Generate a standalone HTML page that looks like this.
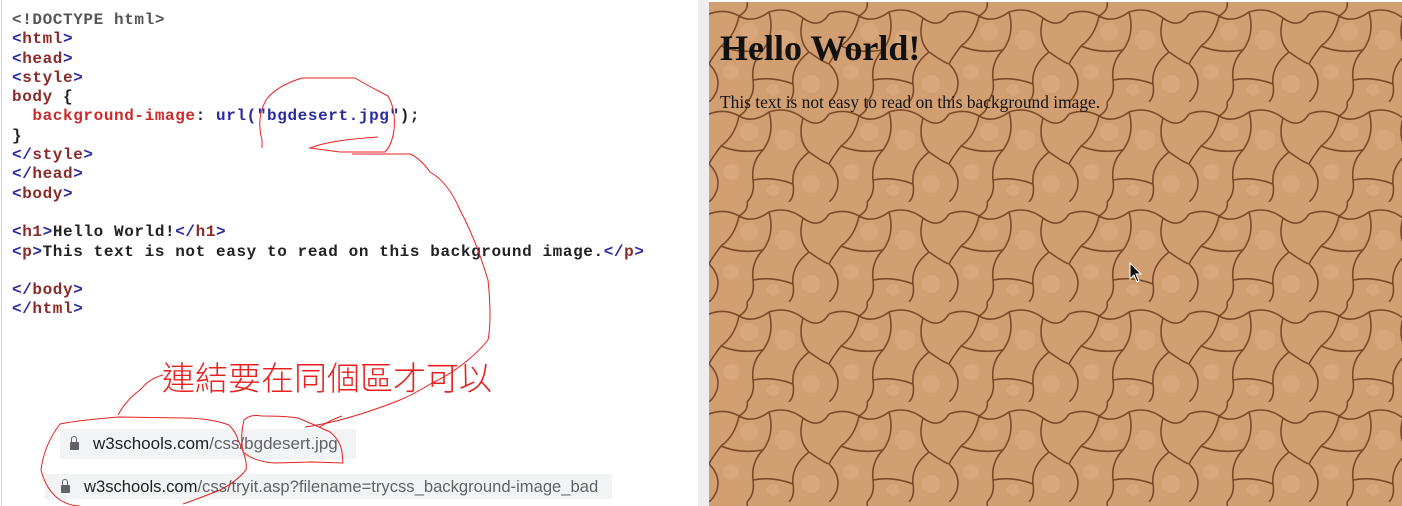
<!DOCTYPE html>
<html><head><meta charset="utf-8">
<style>
html,body{margin:0;padding:0;width:1402px;height:506px;overflow:hidden;background:#fff;position:relative}
.edge{position:absolute;left:1px;top:0;width:1px;height:506px;background:#d8d8d8}
.code{position:absolute;left:12px;top:11px;font-family:"Liberation Mono",monospace;font-size:16px;letter-spacing:0.6px;line-height:19.3px;font-weight:bold;color:#222;white-space:pre;margin:0}
.t{color:#2a2aa0}.n{color:#8a2a2a}.r{color:#cc2a2a}.b{color:#2a2aa0}.g{color:#555}
.div{position:absolute;left:698px;top:0;width:11px;height:506px;background:#eceef0}
.right{position:absolute;left:709px;top:2px;width:693px;height:504px}
.right h1{position:absolute;left:11px;top:25px;margin:0;font-family:"Liberation Serif",serif;font-size:36px;font-weight:bold;color:#111}
.right p{position:absolute;left:11px;top:90px;margin:0;font-family:"Liberation Serif",serif;font-size:17.4px;color:#111}
.bar{position:absolute;background:#f1f3f4;font-family:"Liberation Sans",sans-serif;font-size:17px;color:#202124}
.bar span{color:#5f6368}
.lock{display:inline-block;width:9px;height:8px;background:#5f6368;border-radius:1px;position:relative;margin-right:14px;vertical-align:-1px}
.lock:before{content:"";position:absolute;left:1px;top:-6px;width:4px;height:6px;border:1.5px solid #5f6368;border-bottom:none;border-radius:4px 4px 0 0}
.note{position:absolute;left:162px;top:352px;font-family:"Noto Sans CJK TC","WenQuanYi Zen Hei",sans-serif;font-size:33px;font-weight:300;color:#e82020}
svg.ann{position:absolute;left:0;top:0}
</style></head><body>
<div class="edge"></div>
<div class="code"><span class="g">&lt;!DOCTYPE html&gt;</span>
<span class="t">&lt;</span><span class="n">html</span><span class="t">&gt;</span>
<span class="t">&lt;</span><span class="n">head</span><span class="t">&gt;</span>
<span class="t">&lt;</span><span class="n">style</span><span class="t">&gt;</span>
<span class="n">body</span> {
  <span class="r">background-image</span>: <span class="b">url(</span><span class="b">"bgdesert.jpg"</span>);
}
<span class="t">&lt;/</span><span class="n">style</span><span class="t">&gt;</span>
<span class="t">&lt;/</span><span class="n">head</span><span class="t">&gt;</span>
<span class="t">&lt;</span><span class="n">body</span><span class="t">&gt;</span>

<span class="t">&lt;</span><span class="n">h1</span><span class="t">&gt;</span>Hello World!<span class="t">&lt;/</span><span class="n">h1</span><span class="t">&gt;</span>
<span class="t">&lt;</span><span class="n">p</span><span class="t">&gt;</span>This text is not easy to read on this background image.<span class="t">&lt;/</span><span class="n">p</span><span class="t">&gt;</span>

<span class="t">&lt;/</span><span class="n">body</span><span class="t">&gt;</span>
<span class="t">&lt;/</span><span class="n">html</span><span class="t">&gt;</span></div>

<div class="div"></div>
<div class="right">
<svg width="693" height="504" style="position:absolute;left:0;top:0">
<defs>
<pattern id="d" width="120" height="100" patternUnits="userSpaceOnUse">
<rect width="120" height="100" fill="#d29f73"/>
<g fill="#dcae82" opacity="0.6">
<circle cx="40" cy="30" r="9"/><circle cx="76" cy="38" r="10"/><circle cx="22" cy="70" r="8"/><circle cx="102" cy="82" r="9"/><circle cx="64" cy="88" r="6"/>
</g>
<g fill="none" stroke="#7a4a26" stroke-width="1.6" stroke-linejoin="round">
<path d="M0 12 Q16 6 30 14 T60 10 Q78 4 94 16 T120 12"/>
<path d="M30 14 Q26 34 12 44 Q3 56 0 62"/>
<path d="M60 10 Q66 32 54 48 Q42 60 44 78 Q46 92 38 100"/>
<path d="M94 16 Q88 38 100 50 Q114 60 120 62"/>
<path d="M12 44 Q30 52 54 48"/>
<path d="M100 50 Q82 64 84 82 Q86 94 80 100"/>
<path d="M44 78 Q64 74 84 82"/>
<path d="M0 62 Q12 74 8 88 Q5 96 0 100"/>
<path d="M38 0 Q40 8 30 14"/>
</g>
</pattern>
</defs>
<rect width="693" height="504" fill="url(#d)"/>
</svg>
<h1>Hello World!</h1>
<p>This text is not easy to read on this background image.</p>
<svg style="position:absolute;left:420px;top:260px" width="14" height="22" viewBox="0 0 14 22"><path d="M1 1 L1 17 L5 13 L8 20 L10 19 L7 12 L12 12 Z" fill="#111" stroke="#fff" stroke-width="1"/></svg>
</div>

<div class="bar" style="left:60px;top:429px;width:296px;height:30px;line-height:30px;padding-left:10px;box-sizing:border-box"><i class="lock"></i>w3schools.com<span>/css/bgdesert.jpg</span></div>
<div class="bar" style="left:45px;top:474px;width:567px;height:25px;line-height:25px;padding-left:16px;box-sizing:border-box;font-size:16.6px"><i class="lock"></i>w3schools.com<span>/css/tryit.asp?filename=trycss_background-image_bad</span></div>

<div class="note">連結要在同個區才可以</div>

<svg class="ann" width="700" height="506" fill="none" stroke="#e82020" stroke-width="1">
<path d="M262 148 L262 140 Q256 118 266 100 Q276 86 302 78 L355 78 Q372 88 388 96 Q396 110 394 130 Q392 145 385 152 L340 152 L310 148 Q330 140 378 137"/>
<path d="M352 154 L410 154 Q420 158 430 172 Q448 182 460 210 Q476 240 488 280 Q492 320 488 340 Q480 350 468 360 Q450 375 432 383 Q416 393 400 400 Q370 412 340 420 Q320 425 305 427"/>
<path d="M118 415 Q126 400 140 390 Q150 378 163 375"/>
<path d="M119 417 L183 418 Q210 418 229 425 Q236 432 238 440 Q248 460 246 470 Q236 482 220 490 Q200 498 183 504 M119 417 Q80 420 60 424 Q44 445 41 470 Q46 490 60 500 Q70 506 80 506"/>
<path d="M243 452 Q240 436 244 420 Q250 414 262 416 Q285 416 298 418 Q315 425 330 432 Q340 440 342 452 L343 463 L312 462 L275 463 Q255 462 243 452"/>
<path d="M320 427 Q330 420 342 416"/>
</svg>
</body></html>
